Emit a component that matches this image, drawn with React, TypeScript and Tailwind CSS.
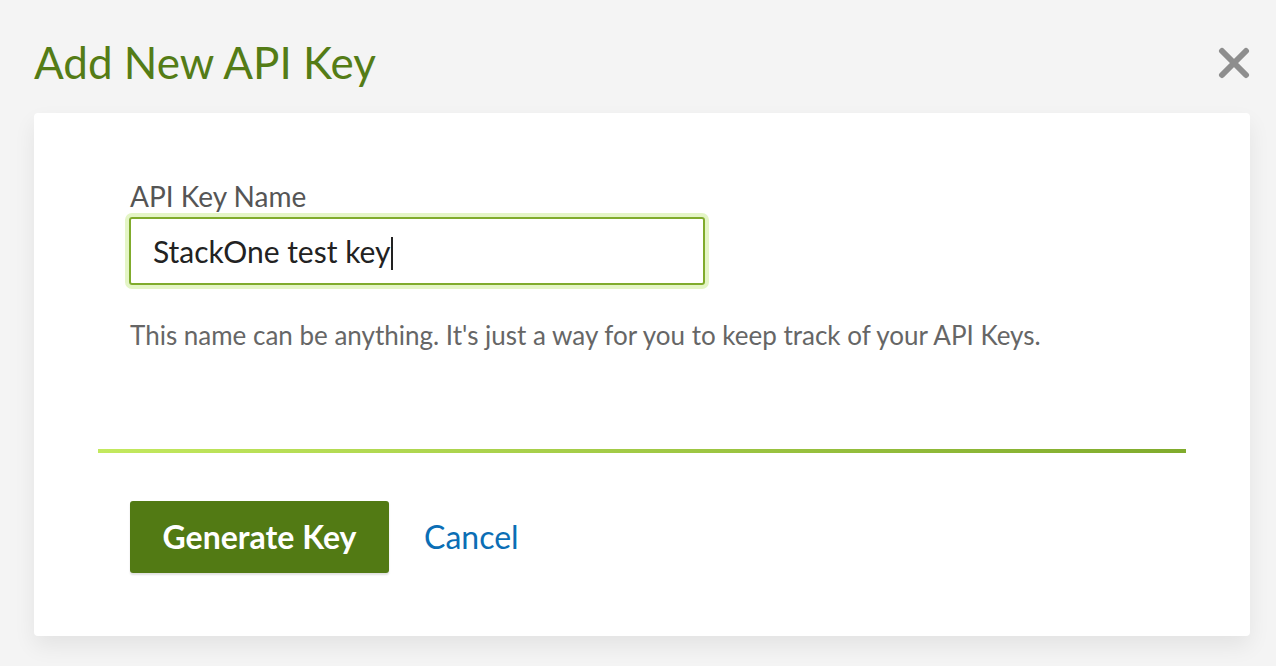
export default function App() {
  return (
    <div className="min-h-[666px] w-full bg-[#f4f4f4] font-['Lato',sans-serif]">
      <div className="flex items-start justify-between pl-[34px] pr-[26px] pt-[36px]">
        <h1 className="text-[44px] leading-[52px] font-normal text-[#547c16]">Add New API Key</h1>
        <button className="mt-[11px]">
          <svg width="32" height="32" viewBox="0 0 32 32" fill="none">
            <path d="M4 4L28 28M28 4L4 28" stroke="#8e8e8e" strokeWidth="6" strokeLinecap="round" />
          </svg>
        </button>
      </div>

      <div className="ml-[34px] mr-[26px] mt-[25px] h-[523px] rounded-[4px] bg-white shadow-[0_10px_22px_rgba(0,0,0,0.07)] pt-[69px] px-[64px]">
        <div className="pl-[32px]">
          <label className="block text-[28px] leading-[28px] text-[#555]">API Key Name</label>
          <div className="mt-[7px] -ml-[1px] w-[576px] h-[68px] rounded-[3px] border-2 border-[#80ab2c] ring-[4px] ring-[#e4f5c6] flex items-center pl-[22px]">
            <span className="text-[30px] text-[#222] leading-none">StackOne test key</span>
            <span className="ml-[1px] h-[33px] w-[2px] bg-[#222] mt-[4px]" />
          </div>
          <p className="mt-[37px] text-[26px] leading-[26px] text-[#666]">
            This name can be anything. It's just a way for you to keep track of your API Keys.
          </p>
        </div>

        <div className="mt-[101px] h-[4px] bg-gradient-to-r from-[#c3e95e] to-[#80ab2c]" />

        <div className="pl-[32px] mt-[48px] flex items-center gap-[35px]">
          <button className="h-[72px] w-[259px] rounded-[3px] bg-[#527a14] text-white text-[32px] font-bold shadow-[0_2px_2px_rgba(0,0,0,0.12)]">
            Generate Key
          </button>
          <button className="text-[32px] text-[#0b6eb5]">Cancel</button>
        </div>
      </div>
    </div>
  )
}
